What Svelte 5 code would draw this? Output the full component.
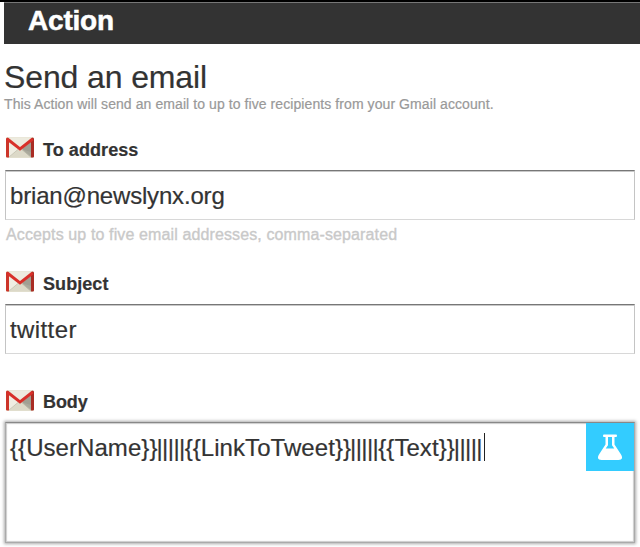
<script>
  const fields = [
    { label: 'To address', value: 'brian@newslynx.org', hint: 'Accepts up to five email addresses, comma-separated', kind: 'to' },
    { label: 'Subject', value: 'twitter', hint: '', kind: 'subject' },
    { label: 'Body', value: '{{UserName}}|||||{{LinkToTweet}}|||||{{Text}}|||||', hint: '', kind: 'body' }
  ];
  const parts = (value) => value.split(/(\|+)/).filter(Boolean);
</script>

{#snippet gmail()}
  <svg class="gmail" width="28" height="21" viewBox="0 0 28 21">
    <rect x="0" y="0" width="28" height="21" rx="1.5" fill="#e6e3d3" />
    <path d="M3 .5H25L14 11Z" fill="#edebdf" />
    <path d="M3 3V20L12 12Z" fill="#efede2" />
    <path d="M16 12L25 20V4Z" fill="#a09f93" />
    <path d="M3 20.5L14 11L25 20.5Z" fill="#dcd9c8" />
    <path d="M15 12L25 20.5V15Z" fill="#aaa99c" />
    <path d="M3 20L12 12.5M16 12.5L25 20" fill="none" stroke="#bdbbaa" stroke-width=".7" />
    <path d="M0 2Q0 .5 1.5 .5L3 2V20.5H1.2Q0 20.5 0 19.5Z" fill="#cc3429" />
    <path d="M28 2Q28 .5 26.5 .5L25 2V20.5H26.8Q28 20.5 28 19.5Z" fill="#a92c24" />
    <path d="M1.3 2L14 12L26.7 2" fill="none" stroke="#d8302a" stroke-width="2.9" />
  </svg>
{/snippet}

<main>
  <div class="edge"></div>
  <header><span>Action</span></header>
  <h1><span>Send an email</span></h1>
  <p class="intro"><span>This Action will send an email to up to five recipients from your Gmail account.</span></p>

  {#each fields as field}
    <section class={field.kind}>
      <div class="label">{@render gmail()}<span>{field.label}</span></div>
      <div class="box">
        <span class="value">{#each parts(field.value) as part}<span class:bars={part[0] === '|'}>{part}</span>{/each}</span>
        {#if field.kind === 'body'}
          <i class="caret"></i>
          <div class="flask">
            <svg width="24" height="27" viewBox="0 0 24 27">
              <path fill="#fff" fill-rule="evenodd" d="M6 .5Q5 .5 5 1.8T6 3H7.5V10.5L1 20.5Q-2 25.8 3.5 26H20.5Q26 25.8 23 20.5L16.5 10.5V3H18Q19 3 19 1.8T18 .5ZM10 3H14V11.3L16.3 14.5H7.7L10 11.3Z" />
            </svg>
          </div>
        {/if}
      </div>
      {#if field.hint}<p class="hint"><span>{field.hint}</span></p>{/if}
    </section>
  {/each}
</main>

<style>
  :global(body) { margin: 0; background: #fff; }
  main {
    width: 640px;
    height: 547px;
    overflow: hidden;
    box-sizing: border-box;
    background: #fff;
    color: #333;
    font-family: "Liberation Sans", Arial, sans-serif;
    white-space: nowrap;
    -webkit-text-stroke: .2px currentColor;
  }
  .edge { height: 2px; background: #000; }
  header {
    height: 41px;
    margin-left: 4px;
    padding-left: 24px;
    border-top: 1px solid #777;
    background: #333;
    color: #fff;
    font-size: 28px;
    font-weight: bold;
    line-height: 36px;
    letter-spacing: -.2px;
    -webkit-text-stroke-width: .5px;
  }
  h1 { margin: 13px 0 0 4px; height: 38px; font-size: 32px; line-height: 40px; font-weight: normal; letter-spacing: -.12px; }
  p { margin: 0; }
  .intro { margin-left: 4px; height: 20px; font-size: 14px; line-height: 19px; color: #999; letter-spacing: .08px; }
  section { padding: 0 5px; box-sizing: border-box; }
  .to { height: 134px; padding-top: 21px; }
  .subject { height: 119px; padding-top: 21px; }
  .body { padding-top: 20px; }
  .label { display: flex; height: 34px; padding-left: 1px; font-size: 18px; font-weight: bold; line-height: 29px; }
  .label span { margin-left: 9px; letter-spacing: .07px; }
  .body .label span { letter-spacing: -.1px; }
  .gmail { flex: none; margin-top: 1px; }
  .body .gmail { margin-top: 2px; }
  .box {
    display: flex;
    height: 50px;
    padding-left: 4px;
    box-sizing: border-box;
    border: 1px solid #c4c4c4;
    border-top-color: #777;
    border-bottom-color: #d8d8d8;
    box-shadow: inset 0 1px #c8c8c8;
    font-size: 24px;
    line-height: 50px;
  }
  .to .value { letter-spacing: -.18px; }
  .subject .value { letter-spacing: .4px; }
  .body .value { letter-spacing: .06px; }
  .body .bars { margin-left: -1px; letter-spacing: -.6px; }
  .hint { margin-left: 1px; height: 29px; font-size: 16px; line-height: 29px; color: #c9c9c9; letter-spacing: .12px; -webkit-text-stroke-width: .35px; }
  .body .box {
    height: 121px;
    border: 1px solid #aaa;
    border-top-color: #888;
    box-shadow: 0 0 3px 1px #aaa, inset 0 0 1px 1px #ccc;
  }
  .caret { width: 1px; height: 28px; margin: 10px 0 0 2px; background: #222; }
  .flask { display: flex; justify-content: center; align-items: center; width: 48px; height: 48px; margin-left: auto; background: #3cf; }
</style>
